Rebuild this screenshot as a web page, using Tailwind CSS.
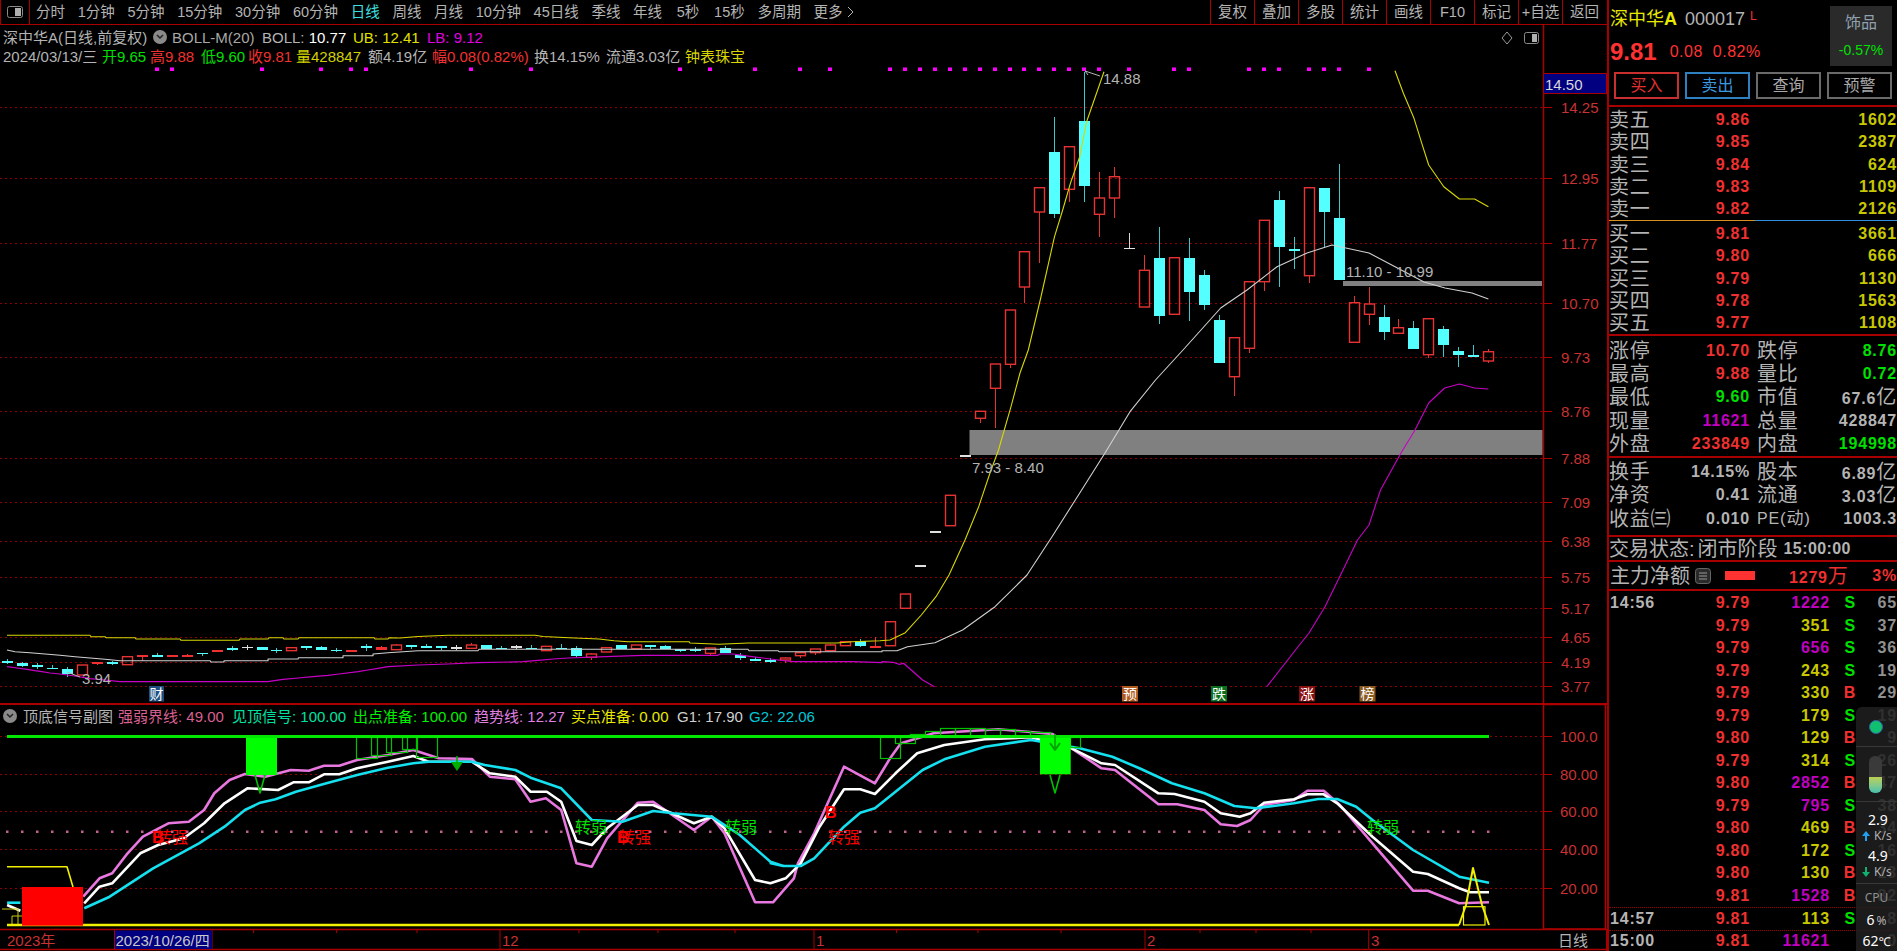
<!DOCTYPE html>
<html lang="zh">
<head>
<meta charset="utf-8">
<title>深中华A</title>
<script src="https://cdn.jsdelivr.net/npm/@tailwindcss/browser@4"></script>
</head>
<body class="bg-black">
<div class="relative flex h-[951px] w-[1897px] overflow-hidden bg-black font-['Liberation_Sans','Noto_Sans_CJK_SC',sans-serif] text-[15px] leading-none text-[#b4b4b4]">

  <!-- left column -->
  <div class="flex w-[1607px] shrink-0 flex-col">
    <!-- toolbar -->
    <div class="flex h-[25px] shrink-0 items-center border-b border-[#a80000] text-[14.5px]">
      <div class="flex h-[24px] w-[30px] shrink-0 items-center justify-center border-x border-[#a80000]">
        <svg width="16" height="12" viewBox="0 0 16 12"><rect x="0.5" y="0.5" width="15" height="11" rx="2" fill="none" stroke="#8a8a8a"/><rect x="8" y="2" width="6" height="8" fill="#b0b0b0"/></svg>
      </div>
      <div class="flex flex-1 items-center gap-[12.7px] pl-[6px]">
        <span>分时</span><span>1分钟</span><span>5分钟</span><span>15分钟</span><span>30分钟</span><span>60分钟</span><span class="text-[#3ce0e0]">日线</span><span>周线</span><span>月线</span><span>10分钟</span><span>45日线</span><span>季线</span><span>年线</span><span class="pl-[2px]">5秒</span><span class="pl-[2px]">15秒</span><span>多周期</span>
        <span class="flex items-center gap-[4px]">更多<svg width="7" height="14" viewBox="0 0 7 14"><path d="M1 2l5 5-5 5" fill="none" stroke="#b4b4b4"/></svg></span>
      </div>
      <div class="mr-[1px] flex h-[24px] shrink-0">
        <span class="flex w-[44px] items-center justify-center border-l border-[#a80000]">复权</span>
        <span class="flex w-[44px] items-center justify-center border-l border-[#a80000]">叠加</span>
        <span class="flex w-[44px] items-center justify-center border-l border-[#a80000]">多股</span>
        <span class="flex w-[44px] items-center justify-center border-l border-[#a80000]">统计</span>
        <span class="flex w-[44px] items-center justify-center border-l border-[#a80000]">画线</span>
        <span class="flex w-[44px] items-center justify-center border-l border-[#a80000]">F10</span>
        <span class="flex w-[44px] items-center justify-center border-l border-[#a80000]">标记</span>
        <span class="flex w-[44px] items-center justify-center border-l border-[#a80000] whitespace-nowrap">+自选</span>
        <span class="flex w-[44px] items-center justify-center border-l border-[#a80000]">返回</span>
      </div>
    </div>

    <!-- main chart pane -->
    <div class="relative h-[678px] shrink-0">
      <svg id="main" class="absolute inset-0" width="1607" height="678" viewBox="0 25 1607 678"></svg>
      <div class="relative flex h-[22px] items-center pt-[2px]">
        <span class="w-[153px] shrink-0 pl-[3px]">深中华A(日线,前复权)</span>
        <span class="flex h-[14px] w-[14px] shrink-0 items-center justify-center rounded-full bg-[#8a8a8a]"><svg width="8" height="6" viewBox="0 0 8 6"><path d="M1 1l3 3 3-3" fill="none" stroke="#222" stroke-width="1.5"/></svg></span>
        <span class="w-[95px] shrink-0 pl-[5px] text-[#a8a8a8]">BOLL-M(20)</span>
        <span class="w-[91px] shrink-0">BOLL: <span class="text-white">10.77</span></span>
        <span class="w-[74px] shrink-0 text-[#e0e000]">UB: 12.41</span>
        <span class="shrink-0 text-[#e000e0]">LB: 9.12</span>
      </div>
      <div class="relative flex h-[19px] items-center">
        <span class="w-[102px] shrink-0 pl-[3px]">2024/03/13/三</span>
        <span class="w-[48px] shrink-0 text-[#00e000]">开9.65</span>
        <span class="w-[51px] shrink-0 text-[#f03030]">高9.88</span>
        <span class="w-[47px] shrink-0 text-[#00e000]">低9.60</span>
        <span class="w-[48px] shrink-0 text-[#f03030]">收9.81</span>
        <span class="w-[72px] shrink-0 text-[#d0d000]">量428847</span>
        <span class="w-[64px] shrink-0">额4.19亿</span>
        <span class="w-[102px] shrink-0 text-[#f03030]">幅0.08(0.82%)</span>
        <span class="w-[72px] shrink-0">换14.15%</span>
        <span class="w-[79px] shrink-0">流通3.03亿</span>
        <span class="shrink-0 text-[#d8d800]">钟表珠宝</span>
      </div>
    </div>

    <!-- indicator pane -->
    <div class="relative h-[226px] shrink-0 border-t-2 border-[#a80000]">
      <svg id="ind" class="absolute left-0 top-[-2px]" width="1607" height="248" viewBox="0 703 1607 248"></svg>
      <div class="relative flex h-[20px] items-center pt-[2px]">
        <span class="flex h-[14px] w-[23px] shrink-0 items-center pl-[3px]"><span class="flex h-[14px] w-[14px] items-center justify-center rounded-full bg-[#8a8a8a]"><svg width="8" height="6" viewBox="0 0 8 6"><path d="M1 1l3 3 3-3" fill="none" stroke="#222" stroke-width="1.5"/></svg></span></span>
        <span class="w-[95px] shrink-0">顶底信号副图</span>
        <span class="w-[114px] shrink-0 text-[#d86090]">强弱界线: 49.00</span>
        <span class="w-[121px] shrink-0 text-[#00e0a0]">见顶信号: 100.00</span>
        <span class="w-[121px] shrink-0 text-[#00f000]">出点准备: 100.00</span>
        <span class="w-[97px] shrink-0 text-[#e080e0]">趋势线: 12.27</span>
        <span class="w-[106px] shrink-0 text-[#e8e800]">买点准备: 0.00</span>
        <span class="w-[72px] shrink-0 text-[#d0d0d0]">G1: 17.90</span>
        <span class="shrink-0 text-[#00c8d8]">G2: 22.06</span>
      </div>
    </div>
    <div class="h-[22px]"></div>
  </div>

  <!-- right column -->
  <div class="flex w-[290px] shrink-0 flex-col border-l-2 border-[#a80000] font-bold tracking-[.8px] text-[16px]">
    <!-- header -->
    <div class="flex h-[107px] shrink-0 flex-col border-b-2 border-[#a80000] pl-[1px] pr-[5px]">
      <div class="flex h-[66px] items-start">
        <div class="flex flex-1 flex-col">
          <div class="flex h-[38px] items-center font-normal tracking-normal">
            <span class="text-[18px] text-[#e8e800]">深中华<b>A</b></span>
            <span class="ml-[8px] text-[18px] text-[#b4b4b4]">000017</span>
            <span class="mb-[6px] ml-[5px] text-[12px] text-[#f03030]">L</span>
          </div>
          <div class="flex h-[28px] items-center text-[#ff3232]">
            <span class="text-[24px] tracking-normal">9.81</span>
            <span class="ml-[13px] font-normal tracking-[.5px]">0.08</span>
            <span class="ml-[10px] font-normal tracking-[.5px]">0.82%</span>
          </div>
        </div>
        <div class="mt-[6px] flex h-[60px] w-[62px] flex-col items-center justify-between bg-[#2a2a2a] py-[9px] text-[14px] font-normal tracking-normal">
          <span class="text-[16px] text-[#8fa0ae]">饰品</span>
          <span class="text-[#00e000]">-0.57%</span>
        </div>
      </div>
      <div class="mt-[6px] grid grid-cols-4 gap-[6px] pl-[4px] font-normal tracking-normal">
        <span class="flex h-[27px] items-center justify-center border-2 border-[#c83030] text-[#e03030]">买入</span>
        <span class="flex h-[27px] items-center justify-center border-2 border-[#2f80c0] text-[#3a9ae0]">卖出</span>
        <span class="flex h-[27px] items-center justify-center border-2 border-[#6a6a6a] text-[#a8a8a8]">查询</span>
        <span class="flex h-[27px] items-center justify-center border-2 border-[#6a6a6a] text-[#a8a8a8]">预警</span>
      </div>
    </div>

    <!-- order book -->
    <div class="flex h-[113px] shrink-0 flex-col pt-[2px] text-[#c8c800]">
      <div class="grid h-[22.4px] grid-cols-[141px_1fr] items-center"><div class="flex items-center justify-between"><span class="text-[20px] font-normal text-[#b4b4b4]">卖五</span><span class="text-[#f03030]">9.86</span></div><span class="text-right">1602</span></div>
      <div class="grid h-[22.4px] grid-cols-[141px_1fr] items-center"><div class="flex items-center justify-between"><span class="text-[20px] font-normal text-[#b4b4b4]">卖四</span><span class="text-[#f03030]">9.85</span></div><span class="text-right">2387</span></div>
      <div class="grid h-[22.4px] grid-cols-[141px_1fr] items-center"><div class="flex items-center justify-between"><span class="text-[20px] font-normal text-[#b4b4b4]">卖三</span><span class="text-[#f03030]">9.84</span></div><span class="text-right">624</span></div>
      <div class="grid h-[22.4px] grid-cols-[141px_1fr] items-center"><div class="flex items-center justify-between"><span class="text-[20px] font-normal text-[#b4b4b4]">卖二</span><span class="text-[#f03030]">9.83</span></div><span class="text-right">1109</span></div>
      <div class="grid h-[22.4px] grid-cols-[141px_1fr] items-center"><div class="flex items-center justify-between"><span class="text-[20px] font-normal text-[#b4b4b4]">卖一</span><span class="text-[#f03030]">9.82</span></div><span class="text-right">2126</span></div>
    </div>
    <div class="flex h-[1px] shrink-0"><span class="w-[146px] bg-[#d89020]"></span><span class="flex-1 bg-[#3090e0]"></span></div>
    <div class="flex h-[115px] shrink-0 flex-col border-b-2 border-[#a80000] pt-[2px] text-[#c8c800]">
      <div class="grid h-[22.4px] grid-cols-[141px_1fr] items-center"><div class="flex items-center justify-between"><span class="text-[20px] font-normal text-[#b4b4b4]">买一</span><span class="text-[#f03030]">9.81</span></div><span class="text-right">3661</span></div>
      <div class="grid h-[22.4px] grid-cols-[141px_1fr] items-center"><div class="flex items-center justify-between"><span class="text-[20px] font-normal text-[#b4b4b4]">买二</span><span class="text-[#f03030]">9.80</span></div><span class="text-right">666</span></div>
      <div class="grid h-[22.4px] grid-cols-[141px_1fr] items-center"><div class="flex items-center justify-between"><span class="text-[20px] font-normal text-[#b4b4b4]">买三</span><span class="text-[#f03030]">9.79</span></div><span class="text-right">1130</span></div>
      <div class="grid h-[22.4px] grid-cols-[141px_1fr] items-center"><div class="flex items-center justify-between"><span class="text-[20px] font-normal text-[#b4b4b4]">买四</span><span class="text-[#f03030]">9.78</span></div><span class="text-right">1563</span></div>
      <div class="grid h-[22.4px] grid-cols-[141px_1fr] items-center"><div class="flex items-center justify-between"><span class="text-[20px] font-normal text-[#b4b4b4]">买五</span><span class="text-[#f03030]">9.77</span></div><span class="text-right">1108</span></div>
    </div>

    <!-- stats -->
    <div class="flex h-[122px] shrink-0 flex-col border-b-2 border-[#a80000] pt-[3px] text-[#b4b4b4]">
      <div class="grid h-[23.4px] grid-cols-[141px_1fr] items-center"><div class="flex items-center justify-between"><span class="text-[20px] font-normal">涨停</span><span class="text-[#f03030]">10.70</span></div><div class="flex items-center justify-between pl-[7px]"><span class="text-[20px] font-normal">跌停</span><span class="text-[#00e000]">8.76</span></div></div>
      <div class="grid h-[23.4px] grid-cols-[141px_1fr] items-center"><div class="flex items-center justify-between"><span class="text-[20px] font-normal">最高</span><span class="text-[#f03030]">9.88</span></div><div class="flex items-center justify-between pl-[7px]"><span class="text-[20px] font-normal">量比</span><span class="text-[#00e000]">0.72</span></div></div>
      <div class="grid h-[23.4px] grid-cols-[141px_1fr] items-center"><div class="flex items-center justify-between"><span class="text-[20px] font-normal">最低</span><span class="text-[#00e000]">9.60</span></div><div class="flex items-center justify-between pl-[7px]"><span class="text-[20px] font-normal">市值</span><span>67.6<span class="text-[20px] font-normal">亿</span></span></div></div>
      <div class="grid h-[23.4px] grid-cols-[141px_1fr] items-center"><div class="flex items-center justify-between"><span class="text-[20px] font-normal">现量</span><span class="text-[#c000c0]">11621</span></div><div class="flex items-center justify-between pl-[7px]"><span class="text-[20px] font-normal">总量</span><span>428847</span></div></div>
      <div class="grid h-[23.4px] grid-cols-[141px_1fr] items-center"><div class="flex items-center justify-between"><span class="text-[20px] font-normal">外盘</span><span class="text-[#f03030]">233849</span></div><div class="flex items-center justify-between pl-[7px]"><span class="text-[20px] font-normal">内盘</span><span class="text-[#00e000]">194998</span></div></div>
    </div>
    <div class="flex h-[79px] shrink-0 flex-col border-b-2 border-[#a80000] pt-[2px] text-[#b4b4b4]">
      <div class="grid h-[23.5px] grid-cols-[141px_1fr] items-center"><div class="flex items-center justify-between"><span class="text-[20px] font-normal">换手</span><span>14.15%</span></div><div class="flex items-center justify-between pl-[7px]"><span class="text-[20px] font-normal">股本</span><span>6.89<span class="text-[20px] font-normal">亿</span></span></div></div>
      <div class="grid h-[23.5px] grid-cols-[141px_1fr] items-center"><div class="flex items-center justify-between"><span class="text-[20px] font-normal">净资</span><span>0.41</span></div><div class="flex items-center justify-between pl-[7px]"><span class="text-[20px] font-normal">流通</span><span>3.03<span class="text-[20px] font-normal">亿</span></span></div></div>
      <div class="grid h-[23.5px] grid-cols-[141px_1fr] items-center"><div class="flex items-center justify-between"><span class="text-[20px] font-normal">收益㈢</span><span>0.010</span></div><div class="flex items-center justify-between pl-[7px]"><span class="font-normal">PE<span class="text-[17px]">(动)</span></span><span>1003.3</span></div></div>
    </div>
    <div class="flex h-[25px] shrink-0 items-center border-b-2 border-[#a80000] pt-[1px] text-[#b4b4b4]">
      <span class="text-[20px] font-normal tracking-normal">交易状态:</span><span class="ml-[3px] text-[20px] font-normal tracking-normal">闭市阶段</span><span class="ml-[6px] tracking-[.4px]">15:00:00</span>
    </div>
    <div class="flex h-[29px] shrink-0 items-center border-b-2 border-[#a80000] text-[#f03030]">
      <span class="pl-[1px] text-[20px] font-normal tracking-normal text-[#b4b4b4]">主力净额</span>
      <svg class="ml-[5px]" width="16" height="16" viewBox="0 0 16 16"><rect x="0.5" y="0.5" width="15" height="15" rx="3" fill="#2a2a2a" stroke="#666"/><path d="M4 5h8M4 8h8M4 11h8" stroke="#999"/></svg>
      <span class="ml-[14px] h-[9px] w-[30px] bg-[#ff3232]"></span>
      <span class="ml-[34px]">1279<span class="text-[20px] font-normal">万</span></span>
      <span class="ml-auto">3%</span>
    </div>

    <!-- ticks -->
    <div class="flex flex-1 flex-col pt-[1px]">
      <div class="grid h-[22.5px] shrink-0 grid-cols-[141px_80px_26px_1fr] items-center"><span class="flex justify-between pl-[1px] text-[#f03030]"><span class="text-[#b4b4b4]">14:56</span>9.79</span><span class="text-right text-[#c000c0]">1222</span><span class="text-right text-[#00e000]">S</span><span class="text-right text-[#909090]">65</span></div>
      <div class="grid h-[22.5px] shrink-0 grid-cols-[141px_80px_26px_1fr] items-center"><span class="text-right text-[#f03030]">9.79</span><span class="text-right text-[#c8c800]">351</span><span class="text-right text-[#00e000]">S</span><span class="text-right text-[#909090]">37</span></div>
      <div class="grid h-[22.5px] shrink-0 grid-cols-[141px_80px_26px_1fr] items-center"><span class="text-right text-[#f03030]">9.79</span><span class="text-right text-[#c000c0]">656</span><span class="text-right text-[#00e000]">S</span><span class="text-right text-[#909090]">36</span></div>
      <div class="grid h-[22.5px] shrink-0 grid-cols-[141px_80px_26px_1fr] items-center"><span class="text-right text-[#f03030]">9.79</span><span class="text-right text-[#c8c800]">243</span><span class="text-right text-[#00e000]">S</span><span class="text-right text-[#909090]">19</span></div>
      <div class="grid h-[22.5px] shrink-0 grid-cols-[141px_80px_26px_1fr] items-center"><span class="text-right text-[#f03030]">9.79</span><span class="text-right text-[#c8c800]">330</span><span class="text-right text-[#f03030]">B</span><span class="text-right text-[#909090]">29</span></div>
      <div class="grid h-[22.5px] shrink-0 grid-cols-[141px_80px_26px_1fr] items-center"><span class="text-right text-[#f03030]">9.79</span><span class="text-right text-[#c8c800]">179</span><span class="text-right text-[#00e000]">S</span><span class="text-right text-[#909090]">19</span></div>
      <div class="grid h-[22.5px] shrink-0 grid-cols-[141px_80px_26px_1fr] items-center"><span class="text-right text-[#f03030]">9.80</span><span class="text-right text-[#c8c800]">129</span><span class="text-right text-[#f03030]">B</span><span class="text-right text-[#909090]">9</span></div>
      <div class="grid h-[22.5px] shrink-0 grid-cols-[141px_80px_26px_1fr] items-center"><span class="text-right text-[#f03030]">9.79</span><span class="text-right text-[#c8c800]">314</span><span class="text-right text-[#00e000]">S</span><span class="text-right text-[#909090]">26</span></div>
      <div class="grid h-[22.5px] shrink-0 grid-cols-[141px_80px_26px_1fr] items-center"><span class="text-right text-[#f03030]">9.80</span><span class="text-right text-[#c000c0]">2852</span><span class="text-right text-[#f03030]">B</span><span class="text-right text-[#909090]">47</span></div>
      <div class="grid h-[22.5px] shrink-0 grid-cols-[141px_80px_26px_1fr] items-center"><span class="text-right text-[#f03030]">9.79</span><span class="text-right text-[#c000c0]">795</span><span class="text-right text-[#00e000]">S</span><span class="text-right text-[#909090]">38</span></div>
      <div class="grid h-[22.5px] shrink-0 grid-cols-[141px_80px_26px_1fr] items-center"><span class="text-right text-[#f03030]">9.80</span><span class="text-right text-[#c8c800]">469</span><span class="text-right text-[#f03030]">B</span><span class="text-right text-[#909090]">34</span></div>
      <div class="grid h-[22.5px] shrink-0 grid-cols-[141px_80px_26px_1fr] items-center"><span class="text-right text-[#f03030]">9.80</span><span class="text-right text-[#c8c800]">172</span><span class="text-right text-[#00e000]">S</span><span class="text-right text-[#909090]">16</span></div>
      <div class="grid h-[22.5px] shrink-0 grid-cols-[141px_80px_26px_1fr] items-center"><span class="text-right text-[#f03030]">9.80</span><span class="text-right text-[#c8c800]">130</span><span class="text-right text-[#f03030]">B</span><span class="text-right text-[#909090]">13</span></div>
      <div class="grid h-[22.5px] shrink-0 grid-cols-[141px_80px_26px_1fr] items-center"><span class="text-right text-[#f03030]">9.81</span><span class="text-right text-[#c000c0]">1528</span><span class="text-right text-[#f03030]">B</span><span class="text-right text-[#909090]">82</span></div>
      <div class="grid h-[22.5px] shrink-0 grid-cols-[141px_80px_26px_1fr] items-center border-t border-dotted border-[#a00000]"><span class="flex justify-between pl-[1px] text-[#f03030]"><span class="text-[#b4b4b4]">14:57</span>9.81</span><span class="text-right text-[#c8c800]">113</span><span class="text-right text-[#00e000]">S</span><span class="text-right text-[#909090]">8</span></div>
      <div class="grid h-[22.5px] shrink-0 grid-cols-[141px_80px_26px_1fr] items-center border-t border-dotted border-[#a00000]"><span class="flex justify-between pl-[1px] text-[#f03030]"><span class="text-[#b4b4b4]">15:00</span>9.81</span><span class="text-right text-[#c000c0]">11621</span><span></span><span class="text-right text-[#909090]">0</span></div>
    </div>
  </div>

  <!-- floating system monitor -->
  <div class="absolute right-0 top-[707px] flex h-[244px] w-[41px] flex-col items-center rounded-tl-[6px] bg-[#202020]/85 font-['Noto_Sans',sans-serif] text-[12px] text-[#b0b0b0]">
    <div class="flex h-[40px] w-full shrink-0 items-center justify-center border-b border-[#383838]"><span class="ml-[-2px] h-[14px] w-[14px] rounded-full border border-[#3060a0] bg-[#10c070]"></span></div>
    <div class="flex h-[55px] w-full shrink-0 items-center justify-center border-b border-[#383838]">
      <div class="ml-[-2px] flex h-[37px] w-[13px] flex-col justify-end overflow-hidden rounded-[6px] bg-[#3a3a3a]"><div class="h-[16px] bg-gradient-to-b from-[#b8d050] to-[#40c0b0]"></div></div>
    </div>
    <div class="flex h-[82px] w-full shrink-0 flex-col border-b border-[#383838] pt-[11px]">
      <span class="pl-[12px] text-[14px] text-white">2.9</span>
      <span class="mt-[3px] flex items-center pl-[5px]"><svg width="10" height="12" viewBox="0 0 10 12"><path d="M5 1l4 5H6v5H4V6H1z" fill="#20a0f0"/></svg><span class="ml-[3px]">K/s</span></span>
      <span class="mt-[7px] pl-[12px] text-[14px] text-white">4.9</span>
      <span class="mt-[3px] flex items-center pl-[5px]"><svg width="10" height="12" viewBox="0 0 10 12"><path d="M5 11l4-5H6V1H4v5H1z" fill="#10b070"/></svg><span class="ml-[3px]">K/s</span></span>
    </div>
    <span class="mt-[8px] text-[12px] text-[#909090]">CPU</span>
    <span class="mt-[9px] text-white text-[14px]">6<span class="ml-[2px] text-[12px] text-[#b0b0b0]">%</span></span>
    <span class="mt-[7px] text-white text-[14px]">62<span class="text-[12px]">℃</span></span>
  </div>
</div>

<script>
var K=function(k){return 7.2+14.96*k};
var CY='#54ffff',RD='#e63232';
function line(x1,y1,x2,y2,c,w,extra){return '<line x1="'+x1+'" y1="'+y1+'" x2="'+x2+'" y2="'+y2+'" stroke="'+c+'" stroke-width="'+(w||1)+'" '+(extra||'')+'/>'}
function rect(x,y,w,h,f,extra){return '<rect x="'+x+'" y="'+y+'" width="'+w+'" height="'+h+'" fill="'+f+'" '+(extra||'')+'/>'}
function poly(p,c,w){return '<polyline fill="none" stroke-linejoin="round" points="'+p.map(function(a){return a[0].toFixed(1)+','+a[1].toFixed(1)}).join(' ')+'" stroke="'+c+'" stroke-width="'+w+'"/>'}
function txt(x,y,s,c,size,extra){return '<text x="'+x+'" y="'+y+'" dominant-baseline="central" fill="'+c+'" font-size="'+(size||15)+'" '+(extra||'')+'>'+s+'</text>'}
function candle(d){
  var k=d[0],t=d[1],b=d[2],hi=d[3],lo=d[4],ty=d[5],x=Math.round(K(k))+.5,l=x-5.5,s='',cr='shape-rendering="crispEdges"';
  if(ty=='c'){
    if(hi!=null&&hi<t)s+=line(x,hi,x,t,'#3cc8c8',1,cr);
    if(lo!=null&&lo>b)s+=line(x,b,x,lo,'#3cc8c8',1,cr);
    s+=rect(l,t,11,Math.max(b-t,1.5),CY,cr);
  }else if(ty=='h'){
    if(hi!=null&&hi<t)s+=line(x,hi,x,t,RD,1,cr);
    if(lo!=null&&lo>b)s+=line(x,b,x,lo,RD,1,cr);
    s+='<rect x="'+(l+.5)+'" y="'+t+'" width="10" height="'+(b-t)+'" fill="none" stroke="'+RD+'" stroke-width="1.4"/>';
  }else if(ty=='r'){
    if(hi!=null&&hi<t)s+=line(x,hi,x,t,RD,1,cr);
    if(lo!=null&&lo>b)s+=line(x,b,x,lo,RD,1,cr);
    s+=rect(l,t,11,Math.max(b-t,1.5),'#f03030',cr);
  }else{
    if(hi!=null&&hi<t)s+=line(x,hi,x,t,'#d8d8d8',1,cr);
    if(lo!=null&&lo>b)s+=line(x,b,x,lo,'#d8d8d8',1,cr);
    s+=rect(l,t,11,Math.max(b-t,1.5),'#e0e0e0',cr);
  }
  return s;
}
var z=function(d){return [d[0],630+d[1]/3,630+d[2]/3,d[3]==null?null:630+d[3]/3,d[4]==null?null:630+d[4]/3,d[5]]};
var left=[[0,94,100,86,102,'c'],[1,100,107,96,112,'c'],[2,105,110,100,116,'c'],[3,113,116,105,116,'c'],[4,116,133,112,140,'c'],[5,105,135,null,null,'h'],[6,95,101,null,104,'r'],[7,97,100,92,105,'c'],[8,80,104,null,null,'h'],[9,76,82,null,92,'r'],[10,75,77,70,82,'c'],[11,75,81,null,null,'r'],[12,75,78,71,null,'r'],[13,68,70,null,78,'c'],[14,60,63,null,67,'r'],[15,54,56,48,63,'c'],[16,50,54,45,60,'w'],[17,52,60,null,null,'c'],[18,59,63,55,68,'c'],[19,53,62,null,null,'h'],[20,49,55,null,59,'c'],[21,52,60,48,null,'c'],[22,59,62,55,65,'c'],[23,60,67,null,null,'r'],[24,47,55,43,62,'c'],[25,52,60,49,null,'r'],[26,45,59,41,null,'h'],[27,45,48,null,56,'c'],
[28,48,55,41,null,'c'],[29,48,52,null,60,'c'],[30,51,57,45,60,'w'],[31,45,55,38,null,'h'],[32,45,57,null,null,'c'],[33,53,57,48,null,'c'],[34,48,54,44,57,'w'],[35,53,57,45,null,'c'],[36,49,62,null,null,'h'],[37,53,57,41,null,'c'],[38,53,77,48,82,'c'],[39,72,82,68,90,'h'],[40,53,66,null,null,'h'],[41,45,56,null,null,'c'],[42,45,56,null,null,'h'],[43,45,51,null,56,'c'],[44,49,56,44,null,'c'],[45,58,62,null,67,'c'],[46,58,62,52,66,'c'],[47,54,70,null,75,'h'],[48,54,70,48,null,'c'],[49,76,84,68,90,'c'],[50,87,89,82,null,'c'],[51,90,91,83,100,'c'],[52,84,90,80,98,'h'],[53,68,77,null,85,'h'],[54,57,68,null,75,'h'],[55,45,62,42,null,'h'],[56,35,47,null,null,'h'],[57,33,48,27,52,'c'],[58,49,52,22,null,'r']].map(z);
var right=[[59,621.7,645.7,null,null,'h'],[60,594,608.3,null,null,'h'],[61,565,566.5,null,null,'w'],[62,531,532.5,null,null,'w'],[63,495.3,525.7,null,null,'h'],[64,455,456.5,null,null,'w'],[65,411.3,418.3,null,423.3,'h'],[66,364,388.3,null,428.3,'h'],[67,310,364.3,null,368.3,'h'],[68,251.7,287,null,303.3,'h'],[69,187.7,212,null,263.3,'h'],[70,152.3,213.7,117.3,218.3,'c'],[71,146.7,189.3,null,201.7,'h'],[72,121.3,186,71.7,202.3,'c'],[73,198,214.3,171.7,237.3,'h'],[74,176.7,198,166.7,218.3,'h'],[75,247.5,249,232.7,null,'w'],[76,270.3,307,255,null,'h'],[77,257.7,316,226.7,324.3,'c'],[78,257.7,314.3,null,null,'h'],[79,257.7,292.3,237.7,321,'c'],[80,275.3,304.7,270,310,'c'],[81,320,363.3,315,null,'c'],[82,337.7,376.7,null,396,'h'],[83,281.7,348.3,null,352.7,'h'],[84,220.3,281.7,null,290.7,'h'],[85,200,247.3,191.3,287.3,'c'],[86,249,250.7,237.3,268.7,'c'],[87,187.7,275.7,null,283.3,'h'],[88,187.7,212.3,null,246.7,'c'],[89,217.7,280,164,null,'c'],[90,302.7,342.3,296,null,'h'],[91,304,314.3,287.3,324.7,'h'],[92,317.3,332.3,305,340,'c'],[93,327.7,333.3,318.7,null,'h'],[94,327.7,349.3,321,null,'c'],[95,318.7,354.7,null,358.3,'h'],[96,328.7,344.7,326,357.3,'c'],[97,351.3,354.7,347.3,367.3,'c'],[98,355.2,356.7,345,null,'c'],[99,351.7,361,349,362.7,'h']];

/* ---------- main pane ---------- */
var m='';
var grid=[[14.25,107],[12.95,178],[11.77,242.7],[10.70,303],[9.73,356.7],[8.76,410.7],[7.88,458],[7.09,502],[6.38,540.7],[5.75,576.7],[5.17,608],[4.65,636.7],[4.19,662],[3.77,685.7]];
grid.forEach(function(g){
  var y=Math.round(g[1])+.5;
  m+=line(0,y,1543,y,'#8c0000',1,'stroke-dasharray="2 3"');
  m+=line(1543,y,1552,y,'#b00000',1);
  m+=txt(1561,y,g[0].toFixed(2),'#c83232');
});
m+=line(1543.5,25,1543.5,703,'#a80000',1.5);
m+=rect(969.5,430,573,25,'#808080');
m+=rect(1343,281,199,5,'#808080');
[10,11,17,21,23,24,31,35,45,47,50,53,55,59,60,61,62,63,64,65,66,67,68,69,70,71,72,73,75,78,79,83,84,85,87,88,89,91].forEach(function(k){m+=rect(Math.round(K(k))-2,67.5,4,3.5,'#ff00ff')});
left.concat(right).forEach(function(d){m+=candle(d)});
var yel=[[7,635.3],[90,635.3],[91,636.7],[105,636.7],[106,637.7],[135,637.7],[136,639],[180,639],[181,640.3],[239,640.3],[240,639],[268,639],[269,637.7],[283,637.7],[284,639],[298,639],[299,637.7],[374,637.7],[375,639],[388,639],[389,637.7],[400,638],[418,636.5],[448,635.3],[535,635.3],[543,636.5],[569,637.7],[599,639],[614,640.7],[628,641.7],[689,641.7],[690,643],[719,644.3],[748,643],[837,643],[852,641.7],[880,640.7],[890,640],[905.3,632.7],[921.3,615],[936,596.7],[949,575],[965,540],[978.7,506.7],[990,473],[998.5,450],[1011,406.7],[1020,373],[1028.3,350],[1040.7,298],[1054.5,236.7],[1062.7,210],[1070.5,183],[1079.7,156.7],[1086.6,121.7],[1104,71.7]];
var yel2=[[1395,70.7],[1403.4,93.3],[1414,118.3],[1421.8,143.3],[1428.7,165],[1443.8,186.7],[1459.4,199],[1474.6,199],[1488.4,206.7]];
var wht=[[7,650],[15,651.7],[30,652.7],[45,654],[60,655.3],[75,656.7],[90,658],[105,659.3],[120,660.7],[210,660.7],[211,662],[224,662],[224,660.7],[268,660.7],[268,659],[298,659],[298.5,657.7],[343,657.7],[343,655.7],[373,655.7],[373,654],[388,652.7],[403,651.7],[418,650.7],[478,650.7],[479,649.3],[748,649.3],[749,650.7],[778,650.7],[779,651.7],[882,651.7],[882,650.7],[897,650.7],[907.5,646.7],[935,642.7],[962.6,630],[995,606.7],[1027,575],[1052,536.7],[1077.4,496.7],[1105,453],[1130,411.7],[1155.5,380],[1183,350],[1220.7,308],[1247,290],[1277,266.7],[1307,253],[1332,245],[1369,253],[1424,282],[1445,288],[1472,293],[1488.4,299]];
var mag=[[7,666.7],[17,668],[27,669.3],[35,670.7],[42,671.7],[50,673],[60,674],[75,676],[90,678.7],[105,680],[120,681.7],[268,681.7],[283,679.3],[298,678],[313,676.7],[328,675.3],[339,674],[358,671.7],[368,670],[378,668.3],[388,666.7],[418,665],[448,664],[478,662.7],[523,661.7],[538,660.3],[553,659],[568,658],[613,656.3],[643,655.3],[718,655.3],[720,654],[733,654],[750,656.3],[763,658],[778,660],[793,661.7],[853,661.7],[882,662.7],[882,661.7],[893,662.3],[899,664.3],[903.6,663.3],[922.6,680],[934.5,686.7]];
var mag2=[[1266.8,686.7],[1295.5,650],[1309,633],[1325,606.7],[1341.4,573.3],[1357.5,540],[1369,525],[1380.5,490],[1401,453],[1415,430],[1428.7,403],[1444.7,388],[1459.4,384],[1474.6,388],[1488.4,389]];
m+=poly(yel,'#d8d800',1.1)+poly(yel2,'#d8d800',1.1)+poly(wht,'#d0d0d0',1.1)+poly(mag,'#c800c8',1.2)+poly(mag2,'#c800c8',1.1);
m+=txt(972,467,'7.93 - 8.40','#b4b4b4');
m+=txt(1346,271,'11.10 - 10.99','#b4b4b4');
m+=line(1085,71,1100,76,'#b4b4b4',1)+line(1085,71,1088,75,'#b4b4b4',1);
m+=txt(1103,78,'14.88','#b4b4b4');
m+=line(67,672,80,677,'#b4b4b4',1);
m+=txt(82,678,'3.94','#b4b4b4');
[[149,'财','#1f4f80',15],[1122,'预','#b05a20',16],[1211,'跌','#0a7020',16],[1299,'涨','#8a1010',16],[1359.5,'榜','#8a5a20',16]].forEach(function(a){
  m+=rect(a[0],686,a[3],15.5,a[2]);
  m+=txt(a[0]+a[3]/2,693.5,a[1],'#ffffff',14,'text-anchor="middle"');
});
m+=rect(1543.5,73.5,63,20,'#000080','stroke="#a80000"');
m+=txt(1545,84,'14.50','#d8d8d8');
m+='<path d="M1507 32l5 6-5 6-5-6z" fill="none" stroke="#9a9a9a"/>';
m+='<rect x="1524.5" y="32.5" width="14" height="11" rx="2" fill="none" stroke="#8a8a8a"/>'+rect(1532,34,5,8,'#b0b0b0');
document.getElementById('main').innerHTML=m;

/* ---------- indicator pane ---------- */
var s='';
var a6=function(l){return l.map(function(p){return [p[0]/1.96,620+p[1]/3]})};
var a7=function(l){return l.map(function(p){return [760+p[0]/1.845,620+p[1]/3]})};
[[100.0,736.5,'100.0'],[80,774.5,'80.00'],[60,811.5,'60.00'],[40,849.5,'40.00'],[20,888.5,'20.00']].forEach(function(g){
  s+=line(0,g[1],1543,g[1],'#8c0000',1,'stroke-dasharray="2 3"');
  s+=line(1543,g[1],1552,g[1],'#b00000',1);
  s+=txt(1560,g[1],g[2],'#c83232');
});
s+='<rect x="1543.5" y="704.5" width="62" height="224.5" fill="none" stroke="#b00000" stroke-width="1.5"/>';
for(var k=0;k<=99;k++)s+=rect(Math.round(K(k))-1,830.5,2.5,2.5,'#c06090');
var pink=a6([[163,830],[195,775],[220,760],[250,700],[280,650],[330,610],[370,605],[400,570],[420,520],[450,480],[480,462],[520,470],[570,450],[605,452],[635,437],[665,437],[700,420],[760,405],[810,390],[860,415],[925,417],[960,470],[1010,478],[1040,545],[1070,535],[1100,570],[1130,730],[1160,740],[1190,655],[1250,548],[1280,545],[1360,630],[1395,590],[1420,640],[1480,847],[1515,847],[1556,775]]).concat(a7([[70,730],[100,640],[155,440],[212,490],[240,415],[260,370],[300,350],[320,340],[440,328],[540,342],[575,385],[630,445],[655,450],[735,553],[770,553],[820,570],[850,613],[880,618],[905,600],[930,555],[985,540],[1010,512],[1040,512],[1070,555],[1130,670],[1205,812],[1232,812],[1290,850],[1345,847]]));
var white=a6([[165,850],[195,800],[220,790],[275,700],[310,675],[360,655],[400,610],[440,550],[485,505],[545,510],[575,487],[605,487],[635,463],[665,463],[700,445],[760,425],[810,408],[840,425],[925,425],[960,460],[1010,470],[1040,515],[1072,515],[1100,545],[1130,663],[1160,675],[1190,625],[1250,555],[1280,555],[1360,610],[1395,590],[1420,625],[1480,780],[1510,790],[1540,775]]).concat(a7([[75,730],[110,620],[155,508],[185,508],[212,522],[250,460],[290,400],[340,375],[415,358],[500,352],[575,385],[630,430],[655,435],[735,520],[765,522],[820,545],[850,580],[885,590],[905,580],[930,548],[985,538],[1010,523],[1040,523],[1065,550],[1130,650],[1205,755],[1232,762],[1290,805],[1310,817],[1345,817]]));
var cyan=a6([[165,865],[215,830],[300,745],[390,670],[440,620],[480,570],[510,548],[540,538],[580,515],[640,490],[700,465],[760,443],[810,430],[840,425],[925,425],[950,435],[1010,450],[1040,473],[1100,505],[1160,600],[1220,605],[1280,573],[1320,580],[1395,590],[1450,645],[1510,725],[1535,738]]).concat(a7([[20,730],[45,738],[75,738],[100,715],[155,620],[185,578],[212,565],[250,515],[300,450],[340,418],[415,380],[500,360],[590,385],[650,410],[700,445],[760,490],[820,520],[875,558],[915,565],[985,550],[1030,537],[1065,537],[1100,560],[1130,600],[1205,690],[1290,770],[1345,788]]));
s+=poly(pink,'#e878e0',2.6)+poly(white,'#ffffff',2.6)+poly(cyan,'#14e0f0',2.6);
s+=poly(a6([[14,848],[40,848]]),'#14e0f0',2.6)+poly(a6([[14,855],[40,872]]),'#ffffff',2.6);
/* yellow */
s+=poly([[7,866.7],[67,866.7],[73,887]],'#f0f000',1.6);
s+=poly([[2,909],[18,909],[18,925]],'#c8c800',1);
s+=poly([[12,925],[12,916],[22,916]],'#c8c800',1);
s+=line(7,925,1459,925,'#f0f000',2.6);
s+=poly([[1459,925],[1466,905],[1473,868],[1482,905],[1489,925]],'#f0f000',2);
s+='<rect x="1463.5" y="906.7" width="21.5" height="18.3" fill="none" stroke="#f0f000" stroke-width="1.2"/>';
/* red box */
s+=rect(22,887,61,38.7,'#ff0000');
/* green hollows */
[[355.6,737,376.5,757.7],[371,737,391,755],[386,737,406.6,752.3],[401.5,737,416,749.3],[416,737,437,756.7],[880,737,900,758.3],[895,737,915,743.3],[910,734,925,737],[925,730.7,940,737],[940,727.7,955,737],[955,727.7,970,737],[970,727.7,985,737],[985,729.3,1000,737],[1000,729.3,1015,737],[1015,730.7,1030,737],[1030,731.7,1050,737],[1070,737,1080,746.7]].forEach(function(r){
  s+='<rect x="'+Math.round(r[0])+'.5" y="'+Math.round(r[1])+'.5" width="'+Math.round(r[2]-r[0])+'" height="'+Math.round(r[3]-r[1])+'" fill="none" stroke="#00c000" stroke-width="1.2"/>';
});
s+=poly([[255,775],[260,793],[265,775]],'#00c000',1.6);
s+=poly([[1050,775],[1055,793],[1060,775]],'#00c000',1.6);
s+=rect(246,736.5,31,38.5,'#00ff00');
s+=rect(1040,736.5,30.7,37.8,'#00ff00');
s+=line(7,736.5,1489,736.5,'#00e800',3);
s+=line(1055,734,1055,748,'#00a000',1.6)+poly([[1050,743],[1055,750],[1060,743]],'#00a000',2);
s+=line(457,756,457,768,'#00b000',1.6)+'<path d="M451 762h12l-6 9z" fill="#00b000"/>';
/* labels */
s+=txt(152,837,'B','#ff0000',17,'font-weight="700"')+txt(156,837,'转强','#ff0000',16);
s+=txt(617,837,'B','#ff0000',17,'font-weight="700"')+txt(619,837,'转强','#ff0000',16);
s+=txt(825,812,'B','#ff0000',16,'font-weight="700"')+txt(828,837,'转强','#ff0000',16);
s+=txt(575,827,'转弱','#00e000',16)+txt(725,827,'转弱','#00e000',16)+txt(1367,827,'转弱','#00e000',16);
/* date bar */
s+=line(0,929.5,1607,929.5,'#a80000',1.5)+line(0,949.5,1607,949.5,'#a80000',1.5);
s+=line(1606.5,929,1606.5,951,'#a80000',1);
[253.6,336.7,417,579,658,735,896.6,978,1061,1200,1256,1311].forEach(function(x){s+=line(x,930,x,933,'#b00000',1)});
[500,814,1145,1368.7,114.5,212].forEach(function(x){s+=line(x,930,x,949,'#a80000',1)});
s+=txt(7,940,'2023年','#c83232');
s+=rect(115,930.5,97,18.5,'#000080')+txt(115.5,940,'2023/10/26/四','#c8c8c8');
s+=txt(502,940,'12','#c83232')+txt(816,940,'1','#c83232')+txt(1147,940,'2','#c83232')+txt(1371,940,'3','#c83232');
s+=txt(1558,940,'日线','#b4b4b4');
document.getElementById('ind').innerHTML=s;
</script>
</body>
</html>
